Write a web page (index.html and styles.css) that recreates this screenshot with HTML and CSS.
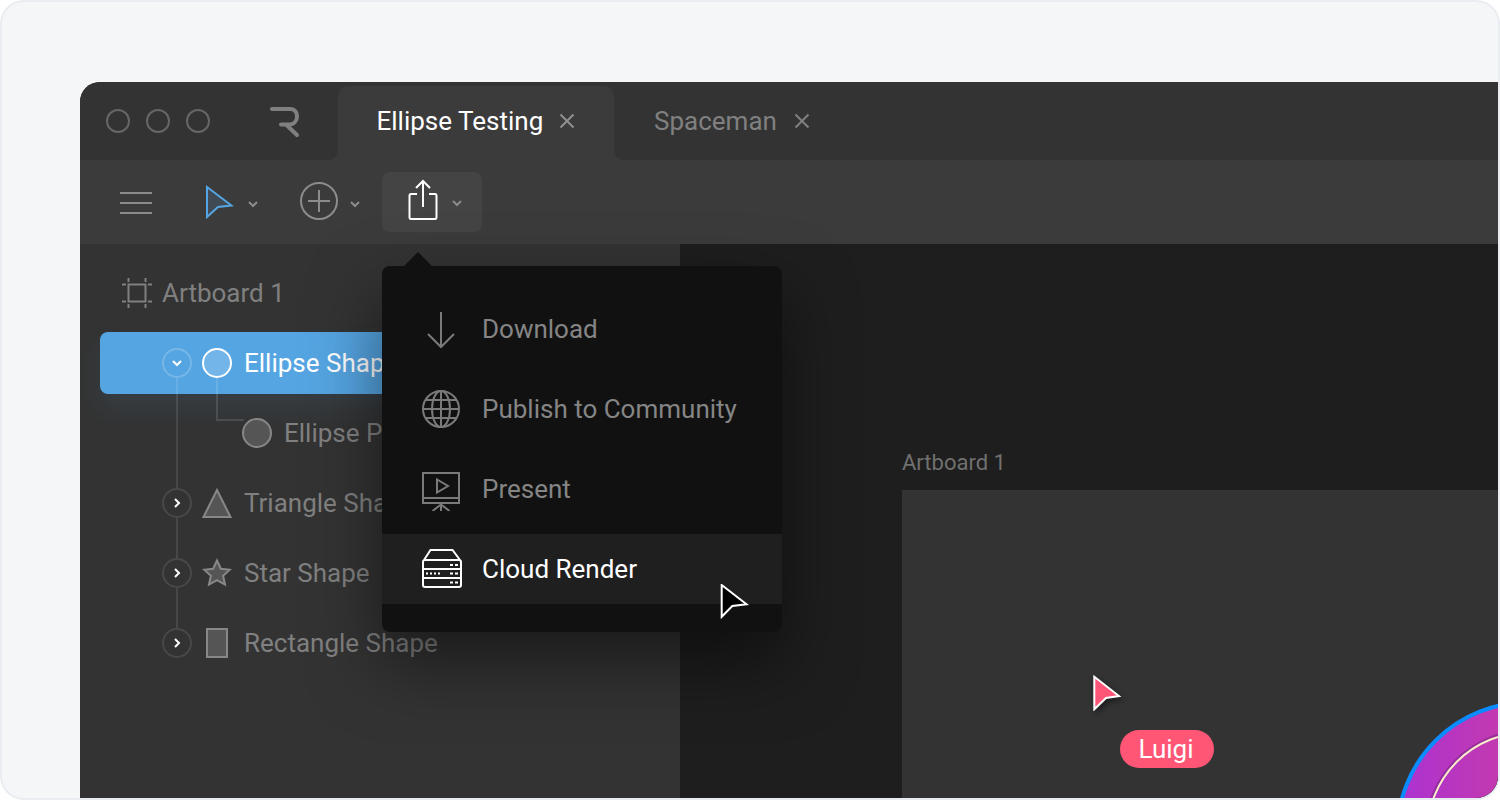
FILE: index.html
```html
<!DOCTYPE html>
<html lang="en">
<head>
<meta charset="utf-8">
<title>Cloud Render</title>
<link rel="stylesheet" href="styles.css">
</head>
<body>
<div class="frame">
  <div class="window">
    <header class="titlebar">
      <div class="title-left">
        <div class="lights"><span class="light"></span><span class="light"></span><span class="light"></span></div>
        <svg class="logo" width="32" height="32" viewBox="0 0 32 32"><path d="M2 3H20C25 3 27 6.500 27 10.500C27 15 24 18.500 19 18.500H11M16 18.500L27 29" fill="none" stroke="#808080" stroke-width="4" stroke-linecap="round"/></svg>
      </div>
      <div class="tab tab-active">
        <span>Ellipse Testing</span>
        <svg class="close" width="16" height="16" viewBox="0 0 16 16"><path d="M1.500 1.500L14.500 14.500M14.500 1.500L1.500 14.500" stroke="#8f8f8f" stroke-width="2" fill="none"/></svg>
      </div>
      <div class="title-right">
        <span>Spaceman</span>
        <svg class="close" width="16" height="16" viewBox="0 0 16 16"><path d="M1.500 1.500L14.500 14.500M14.500 1.500L1.500 14.500" stroke="#808080" stroke-width="2" fill="none"/></svg>
      </div>
    </header>

    <nav class="toolbar">
      <svg class="ico-menu" width="32" height="24" viewBox="0 0 32 24"><path d="M0 2H32M0 12H32M0 22H32" stroke="#8c8c8c" stroke-width="2" fill="none"/></svg>
      <div class="tool tool-pointer">
        <svg width="28" height="34" viewBox="0 0 28 34"><path d="M1 2L25.500 20.500L12 22L1 32Z" fill="#3f4a55" stroke="#55a6e3" stroke-width="2"/></svg>
        <svg class="chev" width="10" height="8" viewBox="0 0 10 8"><path d="M1 2L5 6L9 2" stroke="#8c8c8c" stroke-width="2" fill="none"/></svg>
      </div>
      <div class="tool tool-add">
        <svg width="38" height="38" viewBox="0 0 38 38"><circle cx="19" cy="19" r="18" fill="none" stroke="#8c8c8c" stroke-width="2"/><path d="M19 8V30M8 19H30" stroke="#8c8c8c" stroke-width="2" fill="none"/></svg>
        <svg class="chev" width="10" height="8" viewBox="0 0 10 8"><path d="M1 2L5 6L9 2" stroke="#8c8c8c" stroke-width="2" fill="none"/></svg>
      </div>
      <div class="tool tool-share">
        <svg class="share-icon" width="32" height="42" viewBox="0 0 32 42"><path d="M10 15H4C3 15 2.500 16 2.500 17V38C2.500 39 3 40 4 40H28C29 40 29.500 39 29.500 38V17C29.500 16 29 15 28 15H22M16 28V2M9 9L16 2L23 9" fill="none" stroke="#fff" stroke-width="2"/></svg>
        <svg class="chev" width="10" height="8" viewBox="0 0 10 8"><path d="M1 2L5 6L9 2" stroke="#8c8c8c" stroke-width="2" fill="none"/></svg>
      </div>
    </nav>

    <main class="workspace">
      <aside class="sidebar">
        <div class="row row-artboard">
          <svg width="32" height="32" viewBox="0 0 32 32"><rect x="7.500" y="7.500" width="17" height="17" fill="none" stroke="#808080" stroke-width="2"/><path d="M7.500 1V5M24.500 1V5M7.500 27V31M24.500 27V31M1 7.500H5M1 24.500H5M27 7.500H31M27 24.500H31" stroke="#808080" stroke-width="2" fill="none"/></svg>
          <span>Artboard 1</span>
        </div>

        <div class="row row-selected">
          <span class="toggle toggle-long"><svg width="10" height="8" viewBox="0 0 10 8"><path d="M1 2L5 6L9 2" stroke="#fff" stroke-width="2" fill="none"/></svg></span>
          <span class="shape shape-elbow"><svg width="30" height="30" viewBox="0 0 30 30"><circle cx="15" cy="15" r="14" fill="#73b4e9" stroke="#fff" stroke-width="2"/></svg></span>
          <span class="label">Ellipse Shape</span>
        </div>
        <div class="row row-child">
          <span class="shape"><svg width="30" height="30" viewBox="0 0 30 30"><circle cx="15" cy="15" r="14" fill="#555" stroke="#888" stroke-width="2"/></svg></span>
          <span class="label">Ellipse Path</span>
        </div>
        <div class="row">
          <span class="toggle toggle-line"><svg width="8" height="10" viewBox="0 0 8 10"><path d="M2 1L6 5L2 9" stroke="#fff" stroke-width="2" fill="none"/></svg></span>
          <span class="shape"><svg width="30" height="30" viewBox="0 0 30 30"><path d="M15 2L28.500 29H1.500Z" fill="#555" stroke="#888" stroke-width="2"/></svg></span>
          <span class="label">Triangle Shape</span>
        </div>
        <div class="row">
          <span class="toggle toggle-line"><svg width="8" height="10" viewBox="0 0 8 10"><path d="M2 1L6 5L2 9" stroke="#fff" stroke-width="2" fill="none"/></svg></span>
          <span class="shape"><svg width="30" height="30" viewBox="0 0 30 30"><path d="M15 2.500L18.800 10.700L27.800 11.700L21.100 17.800L23 26.600L15 22.100L7 26.600L8.900 17.800L2.200 11.700L11.200 10.700Z" fill="#555" stroke="#888" stroke-width="2"/></svg></span>
          <span class="label">Star Shape</span>
        </div>
        <div class="row">
          <span class="toggle"><svg width="8" height="10" viewBox="0 0 8 10"><path d="M2 1L6 5L2 9" stroke="#fff" stroke-width="2" fill="none"/></svg></span>
          <span class="shape"><svg width="30" height="30" viewBox="0 0 30 30"><rect x="5" y="1" width="20" height="28" fill="#555" stroke="#888" stroke-width="2"/></svg></span>
          <span class="label">Rectangle Shape</span>
        </div>
      </aside>

      <section class="canvas">
        <div class="canvas-label">Artboard 1</div>
        <div class="artboard">
          <svg class="cursor-luigi" width="30" height="36" viewBox="0 0 30 36"><path d="M1.300 1.700L26 21L13 23L1.300 34.300Z" fill="#ff5577" stroke="#fff" stroke-width="2"/></svg>
          <div class="pill">Luigi</div>
          <svg class="planet" width="120" height="110" viewBox="1378 688 120 110">
            <defs><linearGradient id="purple" x1="0" y1="0" x2="1" y2="0"><stop offset="0" stop-color="#ab32d2"/><stop offset="0.5" stop-color="#c93ba6"/></linearGradient></defs>
            <circle cx="1527.500" cy="832.500" r="130" fill="url(#purple)" stroke="#0a8cff" stroke-width="4"/>
            <circle cx="1527.500" cy="832.500" r="101" fill="none" stroke="#7b2a86" stroke-width="4" opacity="0.6"/>
            <circle cx="1527.500" cy="832.500" r="100" fill="none" stroke="#ffeccc" stroke-width="2"/>
          </svg>
        </div>
      </section>
    </main>

    <div class="menu">
      <div class="menu-item">
        <svg width="42" height="40" viewBox="0 0 42 40"><path d="M20 3V38M7 25L20 38L33 25" fill="none" stroke="#7a7a7a" stroke-width="2"/></svg>
        <span>Download</span>
      </div>
      <div class="menu-item">
        <svg width="42" height="40" viewBox="0 0 42 40"><circle cx="20" cy="20" r="18" fill="none" stroke="#7a7a7a" stroke-width="2"/><ellipse cx="20" cy="20" rx="9" ry="18" fill="none" stroke="#7a7a7a" stroke-width="2"/><path d="M20 2V38M2 20H38M4.500 11H35.500M4.500 29H35.500" fill="none" stroke="#7a7a7a" stroke-width="2"/></svg>
        <span>Publish to Community</span>
      </div>
      <div class="menu-item">
        <svg width="42" height="44" viewBox="0 0 42 44"><path d="M2 6H38V36H2ZM2 31H38M16 12.500V25.500L27 19ZM20 36V44M11.500 44L20 37.500L28.500 44" fill="none" stroke="#7a7a7a" stroke-width="2"/></svg>
        <span>Present</span>
      </div>
      <div class="menu-item menu-item-active">
        <svg width="42" height="40" viewBox="0 0 42 40"><path d="M3 11L9.500 1H31.500L39 11M2 13C2 12 2.500 11 4 11H38C39.500 11 40 12 40 13V36C40 37.500 39.500 38 38 38H4C2.500 38 2 37.500 2 36ZM2 20H40M2 29H40" fill="none" stroke="#fff" stroke-width="2"/><path d="M29 16H37M29 24.500H37M29 33.500H37" stroke="#fff" stroke-width="2" stroke-dasharray="3 2" fill="none"/><path d="M5 24.500H19" stroke="#fff" stroke-width="2" stroke-dasharray="2 2" fill="none"/></svg>
        <span>Cloud Render</span>
      </div>
      <svg class="cursor-black" width="30" height="36" viewBox="0 0 30 36"><path d="M1.700 1L26.500 20.300L12.300 22L1.700 32.700Z" fill="#000" stroke="#fff" stroke-width="2"/></svg>
    </div>
  </div>
</div>
</body>
</html>
```

FILE: styles.css
```css
* { box-sizing: border-box; }
html, body { margin: 0; padding: 0; }
body { font-family: Roboto, "Liberation Sans", sans-serif; }
svg { display: block; flex: none; }

.frame {
  width: 1500px;
  height: 800px;
  background: #f5f6f8;
  border: 2px solid #e9edf2;
  border-radius: 24px;
  overflow: hidden;
  padding: 80px 0 0 78px;
}
.window {
  position: relative;
  height: 716px;
  display: flex;
  flex-direction: column;
  border-top-left-radius: 20px;
  overflow: hidden;
  font-size: 26px;
}

/* title bar */
.titlebar {
  display: flex;
  height: 78px;
  flex: none;
  background: linear-gradient(#333 0 50%, #3b3b3b 50%);
}
.title-left {
  width: 258px;
  display: flex;
  align-items: center;
  background: #333;
  border-bottom-right-radius: 10px;
  padding-left: 26px;
}
.lights { display: flex; gap: 16px; }
.light { width: 24px; height: 24px; border: 2px solid #666; border-radius: 50%; }
.logo { margin-left: 60px; margin-top: 2px; }
.tab {
  width: 276px;
  margin-top: 4px;
  background: #3b3b3b;
  border-radius: 10px 10px 0 0;
  display: flex;
  align-items: center;
  padding: 0 0 4px 38.500px;
  color: #fff;
  gap: 16px;
}
.title-right {
  flex: 1;
  display: flex;
  align-items: center;
  gap: 17px;
  background: #333;
  border-bottom-left-radius: 10px;
  padding-left: 40px;
  color: #808080;
}

/* toolbar */
.toolbar {
  flex: none;
  height: 84px;
  background: #3b3b3b;
  display: flex;
  align-items: center;
  padding-left: 40px;
}
.ico-menu { margin-top: 2px; }
.tool { display: flex; align-items: center; }
.chev { margin-top: 4px; }
.tool-pointer { margin-left: 54px; gap: 14px; }
.tool-add { margin-left: 42px; gap: 12px; margin-top: -2px; }
.tool-add .chev { margin-top: 6px; }
.tool-share {
  margin-left: 22px;
  width: 100px;
  height: 60px;
  background: #444;
  border-radius: 8px;
  padding-left: 25px;
  gap: 13px;
}
.share-icon { margin-top: -4px; }
.tool-share .chev { margin-top: 2px; }

/* workspace */
.workspace { flex: 1; display: flex; min-height: 0; }
.sidebar {
  width: 600px;
  flex: none;
  background: #333;
  padding: 14px 0 0 20px;
  color: #808080;
}
.row {
  height: 70px;
  display: flex;
  align-items: center;
  padding-left: 62px;
}
.row-artboard { padding-left: 21px; gap: 9px; }
.row-selected {
  height: 62px;
  margin: 4px 0;
  background: #55a5e2;
  border-radius: 8px;
  color: #fff;
  box-shadow: 0 14px 26px rgba(85, 165, 226, 0.1);
}
.row-child { padding-left: 142px; }
.toggle {
  position: relative;
  width: 30px;
  height: 30px;
  flex: none;
  border: 2px solid #484848;
  border-radius: 50%;
  display: flex;
  align-items: center;
  justify-content: center;
}
.row-selected .toggle { border-color: rgba(255, 255, 255, 0.2); }
.toggle-line::after,
.toggle-long::after {
  content: "";
  position: absolute;
  left: 12px;
  top: 28px;
  width: 2px;
  height: 40px;
  background: rgba(255, 255, 255, 0.1);
}
.toggle-long::after { height: 110px; }
.shape {
  position: relative;
  width: 30px;
  height: 30px;
  flex: none;
  margin-left: 10px;
}
.row-child .shape { margin-left: 0; }
.shape-elbow::after {
  content: "";
  position: absolute;
  left: 14px;
  top: 30px;
  width: 26px;
  height: 41px;
  border-left: 2px solid rgba(255, 255, 255, 0.12);
  border-bottom: 2px solid rgba(255, 255, 255, 0.12);
}
.label { margin-left: 12px; white-space: nowrap; }

/* canvas */
.canvas {
  flex: 1;
  display: flex;
  flex-direction: column;
  background: #1e1e1e;
  padding: 205px 0 0 222px;
}
.canvas-label {
  height: 28px;
  line-height: 28px;
  font-size: 22px;
  color: #707070;
  margin-bottom: 13px;
}
.artboard { position: relative; flex: 1; background: #333; overflow: hidden; }
.cursor-luigi {
  position: absolute;
  left: 191px;
  top: 185px;
  filter: drop-shadow(2px 3px 3px rgba(0, 0, 0, 0.45));
}
.pill {
  position: absolute;
  left: 218px;
  top: 240px;
  width: 94px;
  height: 38px;
  padding-right: 2px;
  border-radius: 19px;
  background: #ff5675;
  color: #fff;
  text-align: center;
  line-height: 38px;
}
.planet { position: absolute; right: 0; bottom: 0; }

/* dropdown */
.menu {
  position: absolute;
  left: 302px;
  top: 184px;
  width: 400px;
  height: 366px;
  padding-top: 28px;
  background: #111;
  border-radius: 8px;
  box-shadow: 0 30px 70px rgba(0, 0, 0, 0.5);
  display: flex;
  flex-direction: column;
  gap: 10px;
  color: #858585;
}
.menu::before {
  content: "";
  position: absolute;
  left: 22px;
  top: -14px;
  border: 14px solid transparent;
  border-top: 0;
  border-bottom-color: #111;
}
.menu-item {
  height: 70px;
  flex: none;
  display: flex;
  align-items: center;
  gap: 19px;
  padding-left: 39px;
}
.menu-item-active { background: #1f1f1f; color: #fff; }
.cursor-black { position: absolute; left: 338px; top: 318px; }
```
